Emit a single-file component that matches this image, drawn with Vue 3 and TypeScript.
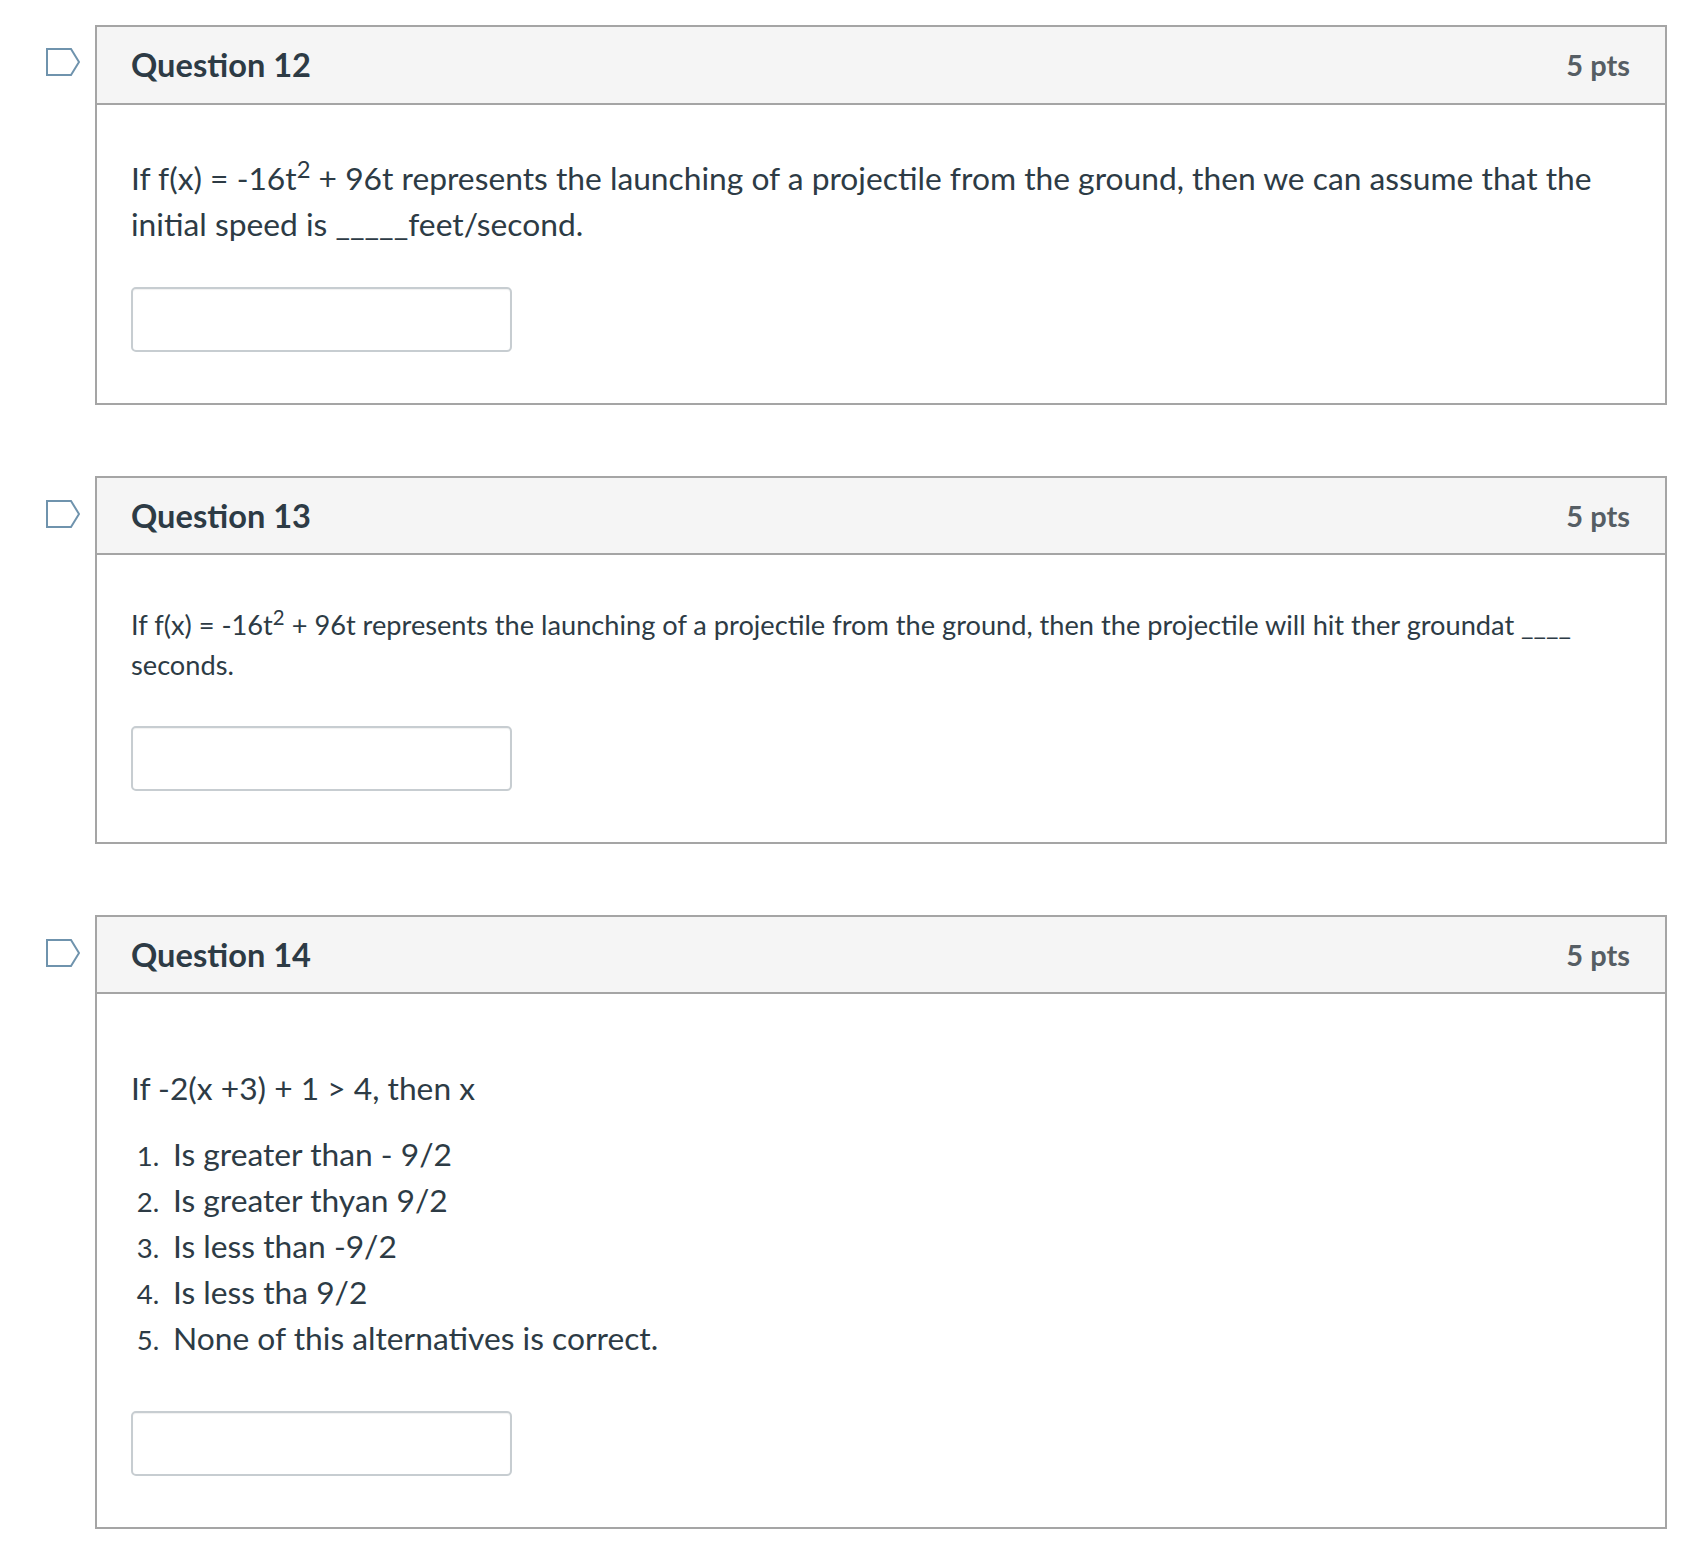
<script setup lang="ts">
const choices: string[] = [
  'Is greater than - 9/2',
  'Is greater thyan 9/2',
  'Is less than -9/2',
  'Is less tha 9/2',
  'None of this alternatives is correct.',
]
</script>

<template>
  <main class="quiz">
    <section class="question-row">
      <svg class="flag" width="34" height="28" viewBox="0 0 34 28" aria-hidden="true">
        <path d="M1 1 H25 L33 14 L25 27 H1 Z" />
      </svg>
      <div class="card">
        <header class="card-header">
          <h3>Question 12</h3>
          <span class="pts">5 pts</span>
        </header>
        <div class="card-body body-q12">
          <p>If f(x) = -16t<sup>2</sup> + 96t represents the launching of a projectile from the ground, then we can assume that the initial speed is _____feet/second.</p>
          <input class="answer" type="text" />
        </div>
      </div>
    </section>

    <section class="question-row question-row--low-flag">
      <svg class="flag" width="34" height="28" viewBox="0 0 34 28" aria-hidden="true">
        <path d="M1 1 H25 L33 14 L25 27 H1 Z" />
      </svg>
      <div class="card">
        <header class="card-header card-header--short">
          <h3>Question 13</h3>
          <span class="pts">5 pts</span>
        </header>
        <div class="card-body body-q13">
          <p>If f(x) = -16t<sup>2</sup> + 96t represents the launching of a projectile from the ground, then the projectile will hit ther groundat ____ seconds.</p>
          <input class="answer" type="text" />
        </div>
      </div>
    </section>

    <section class="question-row question-row--low-flag">
      <svg class="flag" width="34" height="28" viewBox="0 0 34 28" aria-hidden="true">
        <path d="M1 1 H25 L33 14 L25 27 H1 Z" />
      </svg>
      <div class="card">
        <header class="card-header card-header--short">
          <h3>Question 14</h3>
          <span class="pts">5 pts</span>
        </header>
        <div class="card-body body-q14">
          <p>If -2(x +3) + 1 &gt; 4, then x</p>
          <ol>
            <li v-for="choice in choices" :key="choice">{{ choice }}</li>
          </ol>
          <input class="answer" type="text" />
        </div>
      </div>
    </section>
  </main>
</template>

<style>
html,
body {
  margin: 0;
  background: #fff;
}
</style>

<style scoped>
.quiz {
  box-sizing: border-box;
  width: 1707px;
  min-height: 1553px;
  padding: 25px 40px 0 46px;
  font-family: Lato, "Open Sans", sans-serif;
  color: #2d3b45;
}

.question-row {
  display: flex;
  align-items: flex-start;
  gap: 15px;
  margin-bottom: 71px;
}

.flag {
  flex: none;
  margin-top: 23px;
}

.question-row--low-flag .flag {
  margin-top: 24px;
}

.flag path {
  fill: #fff;
  stroke: #6f93ad;
  stroke-width: 2;
}

.card {
  flex: 1;
  border: 2px solid #a5a5a5;
}

.card-header {
  box-sizing: border-box;
  display: flex;
  align-items: center;
  justify-content: space-between;
  height: 78px;
  padding: 0 35px 2px 34px;
  background: #f5f5f5;
  border-bottom: 2px solid #a5a5a5;
}

.card-header--short {
  height: 77px;
  padding-bottom: 0;
}

.card-header h3 {
  margin: 0;
  font-size: 32.6px;
  font-weight: 700;
}

.pts {
  font-size: 29px;
  font-weight: 700;
  color: #565e64;
}

.card-body {
  padding: 0 35px 51px 34px;
}

.card-body p {
  margin: 0;
}

.body-q12 {
  padding-top: 50px;
  font-size: 31.75px;
  line-height: 46px;
}

.body-q13 {
  padding-top: 50px;
  font-size: 27.2px;
  line-height: 40px;
}

.body-q14 {
  padding-top: 71px;
  font-size: 31.75px;
  line-height: 46px;
}

sup {
  font-size: 75%;
  line-height: 0;
  vertical-align: baseline;
  position: relative;
  top: -0.5em;
}

ol {
  margin: 20px 0 0;
  padding-left: 42px;
}

ol li::marker {
  content: counter(list-item) ".\2002";
  font-size: 27.5px;
}

.answer {
  display: block;
  box-sizing: border-box;
  width: 381px;
  height: 65px;
  margin-top: 40px;
  padding: 0;
  background: #fff;
  border: 2px solid #c7cdd1;
  border-radius: 5px;
  box-shadow: inset 0 1px 1px rgba(0, 0, 0, 0.06);
}

.body-q13 .answer {
  margin-top: 41px;
}

.body-q14 .answer {
  margin-top: 50px;
}
</style>
